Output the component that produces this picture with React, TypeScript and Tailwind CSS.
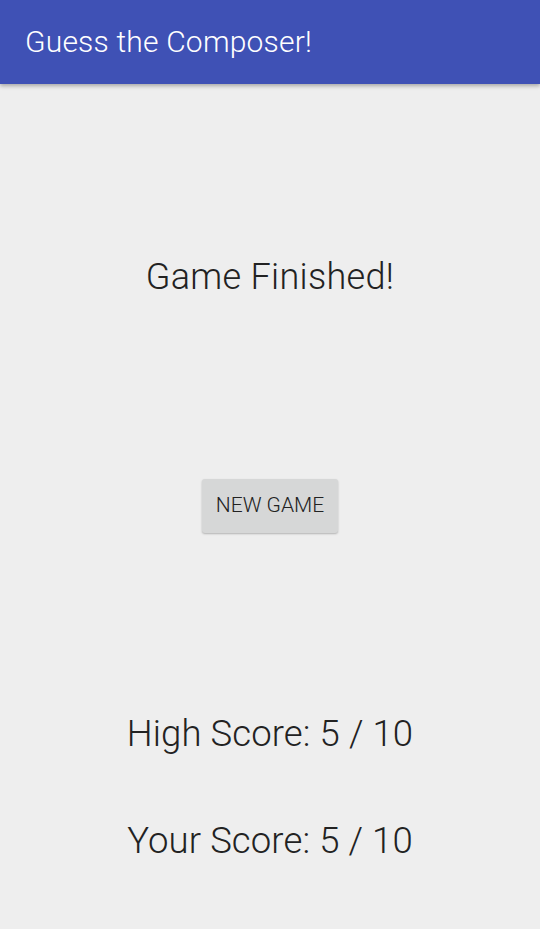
import React from 'react';

const App: React.FC = () => {
  return (
    <div className="min-h-[929px] w-full bg-[#eeeeee] font-['Roboto',sans-serif]">
      <header className="flex h-[84px] items-center bg-[#3f51b5] px-[25px] shadow-[0_2px_4px_rgba(0,0,0,0.3)]">
        <h1 className="text-[30px] font-light leading-none tracking-[0.2px] text-white">Guess the Composer!</h1>
      </header>

      <main className="flex flex-col items-center">
        <p className="mt-[171px] text-[36px] font-light leading-[44px] tracking-[0.3px] text-[#222222]">Game Finished!</p>

        <button className="mt-[180px] h-[54px] w-[136px] rounded-[3px] bg-[#d6d7d7] text-[21px] font-light uppercase text-[#222222] shadow-[0_1px_2px_rgba(0,0,0,0.25)]">
          New Game
        </button>

        <p className="mt-[178px] text-[36.5px] font-light leading-[46px] tracking-[0.1px] text-[#222222]">High Score: 5 / 10</p>
        <p className="mt-[61px] text-[36.5px] font-light leading-[46px] tracking-[0.1px] text-[#222222]">Your Score: 5 / 10</p>
      </main>
    </div>
  );
};

export default App;
